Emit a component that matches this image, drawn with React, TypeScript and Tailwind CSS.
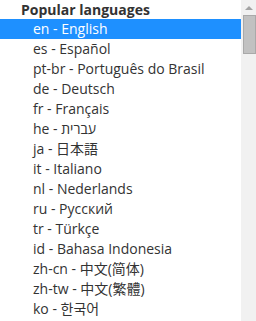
import React from "react";

const languages = [
  "en - English",
  "es - Español",
  "pt-br - Português do Brasil",
  "de - Deutsch",
  "fr - Français",
  "he - עברית",
  "ja - 日本語",
  "it - Italiano",
  "nl - Nederlands",
  "ru - Русский",
  "tr - Türkçe",
  "id - Bahasa Indonesia",
  "zh-cn - 中文(简体)",
  "zh-tw - 中文(繁體)",
  "ko - 한국어",
];

export default function App() {
  return (
    <div
      className="flex h-[321px] w-[256px] overflow-hidden bg-white text-[14px] text-[#333]"
      style={{ fontFamily: '"Open Sans", "Noto Sans CJK JP", "Noto Sans CJK KR", sans-serif' }}
    >
      {/* list */}
      <div className="min-w-0 flex-1">
        <div className="flex h-[19px] items-center pl-[21px] font-bold leading-none">Popular languages</div>
        {languages.map((l, i) => (
          <div
            key={l}
            className={
              i === 0
                ? "flex h-5 items-center whitespace-nowrap bg-[#1e90ff] pl-[33px] leading-none text-white"
                : "flex h-5 items-center whitespace-nowrap pl-[33px] leading-none"
            }
          >
            {l}
          </div>
        ))}
      </div>

      {/* scrollbar */}
      <div className="flex w-[15px] shrink-0 flex-col items-center bg-[#f1f1f1]">
        <div className="flex h-[15px] w-full items-center justify-center">
          <div className="h-0 w-0 border-x-[4px] border-b-[4px] border-x-transparent border-b-[#a3a3a3]" />
        </div>
        <div className="ml-[2px] h-[39px] w-[13px] border border-[#a9a9a9] bg-[#c1c1c1]" />
      </div>
    </div>
  );
}
